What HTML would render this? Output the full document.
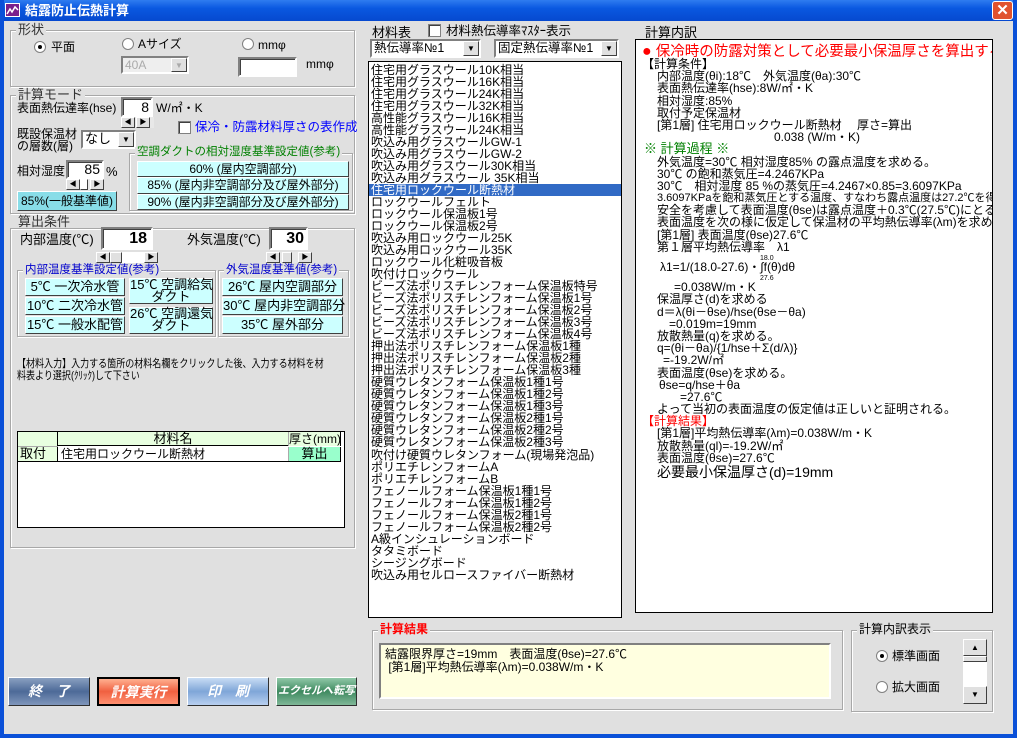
<!DOCTYPE html>
<html><head><meta charset="utf-8"><style>
*{margin:0;padding:0;box-sizing:border-box}
body{width:1017px;height:738px;overflow:hidden;background:#e0e0e0;font-family:"Liberation Sans","Noto Sans CJK JP",sans-serif;font-size:12px;color:#000;position:relative}
.a{position:absolute;white-space:nowrap;line-height:1}
.grp{position:absolute;border:1px solid #a8a8a8;box-shadow:inset 1px 1px 0 #fff,1px 1px 0 #fff}
.lbl{position:absolute;background:#e0e0e0;padding:0 2px;white-space:nowrap;line-height:1}
.tb{position:absolute;background:#fff;border:2px solid;border-color:#808080 #fff #fff #808080;box-shadow:inset 1px 1px 0 #404040}
.btn{position:absolute;border:1px solid;border-color:#fff #404040 #404040 #fff;text-align:center;white-space:nowrap}
.cy{background:#ccffff}
.radio{position:absolute;width:12px;height:12px;border-radius:50%;background:#fff;border:1px solid #808080}
.radio.on::after{content:"";position:absolute;left:3px;top:3px;width:4px;height:4px;border-radius:50%;background:#000}
.chk{position:absolute;width:13px;height:13px;background:#fff;border:1px solid #808080;box-shadow:inset 1px 1px 0 #404040}
.sb{position:absolute;height:11px;background:#e8e8e8}
.sb i{position:absolute;top:0;width:14px;height:11px;background:#e0e0e0;border:1px solid;border-color:#fff #404040 #404040 #fff;font-style:normal;font-size:7px;line-height:9px;text-align:center}
.combo{position:absolute;background:#fff;border:2px solid;border-color:#808080 #fff #fff #808080;padding-left:2px;line-height:14px}
.combo b{position:absolute;right:0;top:0;width:16px;height:100%;background:#e0e0e0;border:1px solid;border-color:#fff #404040 #404040 #fff;font-size:8px;text-align:center;line-height:13px;font-weight:normal}
.list div{height:12.03px;line-height:12px;padding-left:2px;white-space:nowrap;font-size:12px}
.rt div{height:12.2px;line-height:12px;white-space:nowrap}
.bb{position:absolute;height:29px;border:1px solid;border-color:#fff #303030 #303030 #fff;color:#fff;font-weight:bold;font-style:italic;text-align:center;line-height:26px;font-size:14px}
</style></head><body>
<div class="a" style="left:0;top:0;width:1017px;height:21px;background:linear-gradient(#2f7cf0,#0a58e0 40%,#0649cf)"></div>
<div class="a" style="left:0;top:0;width:4px;height:738px;background:#0a50d8"></div>
<div class="a" style="left:1013px;top:0;width:4px;height:738px;background:#0a50d8"></div>
<div class="a" style="left:0;top:734px;width:1017px;height:4px;background:#0a50d8"></div>
<div class="a" style="left:5px;top:3px;width:15px;height:14px;background:#7a1f8c;border:1px solid #fff"><svg width="13" height="12"><path d="M1 10 L4 5 L6 8 L9 3 L12 6" stroke="#fff" stroke-width="1.5" fill="none"/></svg></div>
<div class="a" style="left:25px;top:4px;color:#fff;font-weight:bold;font-size:13px">結露防止伝熱計算</div>
<div class="a" style="left:992px;top:1px;width:21px;height:19px;background:#e0522e;border:1px solid #fff;border-radius:3px;color:#fff;text-align:center;font-size:15px;line-height:17px;font-weight:bold">✕</div>

<div class="grp" style="left:10px;top:30px;width:345px;height:57px"></div>
<div class="lbl" style="left:16px;top:23px;font-size:13px;color:#333">形状</div>
<div class="radio on" style="left:34px;top:41px"></div><div class="a" style="left:51px;top:41px">平面</div>
<div class="radio" style="left:122px;top:38px"></div><div class="a" style="left:138px;top:38px">Aサイズ</div>
<div class="radio" style="left:242px;top:38px"></div><div class="a" style="left:258px;top:39px">mmφ</div>
<div class="combo" style="left:121px;top:56px;width:68px;height:18px;color:#aaa;background:#eee">40A<b style="color:#aaa">▼</b></div>
<div class="tb" style="left:238px;top:57px;width:59px;height:20px"></div>
<div class="a" style="left:306px;top:58px">mmφ</div>

<div class="grp" style="left:10px;top:95px;width:345px;height:119px"></div>
<div class="lbl" style="left:16px;top:88px;font-size:13px;color:#333">計算モード</div>
<div class="a" style="left:17px;top:102px">表面熱伝達率(hse)</div>
<div class="tb" style="left:121px;top:97px;width:32px;height:20px;text-align:right;font-size:14px;padding-right:2px;line-height:16px">8</div>
<div class="a" style="left:156px;top:102px">W/㎡・K</div>
<div class="sb" style="left:121px;top:117px;width:33px"><i style="left:0">◀</i><i style="left:15px">▶</i></div>
<div class="chk" style="left:178px;top:121px"></div>
<div class="a" style="left:195px;top:121px;color:#0000ff;font-size:12.5px">保冷・防露材料厚さの表作成</div>
<div class="a" style="left:17px;top:128px">既設保温材</div>
<div class="a" style="left:17px;top:140px">の層数(層)</div>
<div class="combo" style="left:81px;top:130px;width:55px;height:19px;font-size:13px">なし<b>▼</b></div>
<div class="a" style="left:17px;top:165px">相対湿度</div>
<div class="tb" style="left:66px;top:160px;width:38px;height:19px;text-align:right;font-size:14px;padding-right:2px;line-height:15px">85</div>
<div class="a" style="left:106px;top:165px;font-size:13px">%</div>
<div class="sb" style="left:66px;top:179px;width:38px"><i style="left:0">◀</i><i style="left:24px">▶</i><i style="left:14px;width:8px;background:#fff"></i></div>
<div class="btn" style="left:17px;top:191px;width:100px;height:20px;background:#88dde8;line-height:18px">85%(一般基準値)</div>
<div class="grp" style="left:129px;top:153px;width:224px;height:58px"></div>
<div class="lbl" style="left:135px;top:147px;color:#008000;font-size:11.5px">空調ダクトの相対湿度基準設定値(参考)</div>
<div class="btn cy" style="left:137px;top:161px;width:212px;height:16px;line-height:14px">60% (屋内空調部分)</div>
<div class="btn cy" style="left:137px;top:177px;width:212px;height:17px;line-height:15px">85% (屋内非空調部分及び屋外部分)</div>
<div class="btn cy" style="left:137px;top:194px;width:212px;height:16px;line-height:14px">90% (屋内非空調部分及び屋外部分)</div>

<div class="grp" style="left:10px;top:228px;width:345px;height:320px"></div>
<div class="lbl" style="left:16px;top:215px;font-size:13px;color:#333">算出条件</div>
<div class="a" style="left:20px;top:233px;font-size:13px">内部温度(℃)</div>
<div class="tb" style="left:101px;top:227px;width:52px;height:23px;text-align:right;font-size:16px;font-weight:bold;padding-right:4px;line-height:19px">18</div>
<div class="sb" style="left:96px;top:252px;width:62px;background:#fff"><i style="left:0">◀</i><i style="left:48px">▶</i><i style="left:14px;width:12px"></i></div>
<div class="a" style="left:187px;top:233px;font-size:13px">外気温度(℃)</div>
<div class="tb" style="left:269px;top:227px;width:39px;height:23px;text-align:right;font-size:16px;font-weight:bold;padding-right:2px;line-height:19px">30</div>
<div class="sb" style="left:266px;top:252px;width:46px"><i style="left:0">◀</i><i style="left:32px">▶</i><i style="left:16px;width:10px"></i></div>
<div class="grp" style="left:17px;top:270px;width:199px;height:67px"></div>
<div class="lbl" style="left:23px;top:265px;color:#0000cc;font-size:11.5px">内部温度基準設定値(参考)</div>
<div class="grp" style="left:218px;top:270px;width:131px;height:67px"></div>
<div class="lbl" style="left:224px;top:265px;color:#0000cc;font-size:11.5px">外気温度基準値(参考)</div>
<div class="btn cy" style="left:25px;top:278px;width:100px;height:18px;line-height:16px;font-size:13px">5℃ 一次冷水管</div>
<div class="btn cy" style="left:25px;top:297px;width:100px;height:18px;line-height:16px;font-size:13px">10℃ 二次冷水管</div>
<div class="btn cy" style="left:25px;top:316px;width:100px;height:18px;line-height:16px;font-size:13px">15℃ 一般水配管</div>
<div class="btn cy" style="left:129px;top:278px;width:84px;height:26px;line-height:12px;font-size:13px">15℃ 空調給気<br>ダクト</div>
<div class="btn cy" style="left:129px;top:307px;width:84px;height:27px;line-height:12px;font-size:13px">26℃ 空調還気<br>ダクト</div>
<div class="btn cy" style="left:222px;top:278px;width:121px;height:18px;line-height:16px;font-size:13px">26℃ 屋内空調部分</div>
<div class="btn cy" style="left:222px;top:297px;width:121px;height:18px;line-height:16px;font-size:13px">30℃ 屋内非空調部分</div>
<div class="btn cy" style="left:222px;top:316px;width:121px;height:18px;line-height:16px;font-size:13px">35℃ 屋外部分</div>
<div class="a" style="left:17px;top:358px;font-size:11px;line-height:12px;transform:scaleX(0.82);transform-origin:0 0">【材料入力】入力する箇所の材料名欄をクリックした後、入力する材料を材<br>料表より選択(ｸﾘｯｸ)して下さい</div>
<div class="a" style="left:17px;top:431px;width:328px;height:97px;background:#fff;border:1px solid #000"></div>
<div class="a" style="left:18px;top:432px;width:40px;height:29px;background:#e8ffe0;border-right:1px solid #000"></div>
<div class="a" style="left:58px;top:432px;width:230px;height:14px;background:#e8ffe0;border-bottom:1px solid #000;text-align:center;font-size:13px;line-height:14px">材料名</div>
<div class="a" style="left:288px;top:432px;width:53px;height:14px;background:#e8ffe0;border-left:1px solid #aaa;border-right:1px solid #000;font-size:12px;line-height:14px">厚さ(mm)</div>
<div class="a" style="left:18px;top:446px;width:40px;height:1px;background:#aaa"></div>
<div class="a" style="left:20px;top:447px;font-size:13px">取付</div>
<div class="a" style="left:61px;top:448px">住宅用ロックウール断熱材</div>
<div class="a" style="left:288px;top:447px;width:53px;height:14px;background:#99ffcc;border-left:1px solid #aaa;border-right:1px solid #000;text-align:center;font-size:13px;line-height:14px">算出</div>
<div class="a" style="left:18px;top:461px;width:323px;height:1px;background:#000"></div>

<div class="a" style="left:372px;top:26px;font-size:13px">材料表</div>
<div class="chk" style="left:428px;top:24px"></div>
<div class="a" style="left:446px;top:25px;font-size:12.5px">材料熱伝導率ﾏｽﾀｰ表示</div>
<div class="combo" style="left:370px;top:39px;width:111px;height:19px;font-size:12.5px">熱伝導率№1<b>▼</b></div>
<div class="combo" style="left:494px;top:39px;width:125px;height:19px;font-size:12.5px">固定熱伝導率№1<b>▼</b></div>
<div class="a list" style="left:368px;top:61px;width:254px;height:557px;background:#fff;border:1px solid #000;padding-top:2px">
<div>住宅用グラスウール10K相当</div><div>住宅用グラスウール16K相当</div><div>住宅用グラスウール24K相当</div><div>住宅用グラスウール32K相当</div><div>高性能グラスウール16K相当</div><div>高性能グラスウール24K相当</div><div>吹込み用グラスウールGW-1</div><div>吹込み用グラスウールGW-2</div><div>吹込み用グラスウール30K相当</div><div>吹込み用グラスウール 35K相当</div><div style="background:#316ac5;color:#fff">住宅用ロックウール断熱材</div><div>ロックウールフェルト</div><div>ロックウール保温板1号</div><div>ロックウール保温板2号</div><div>吹込み用ロックウール25K</div><div>吹込み用ロックウール35K</div><div>ロックウール化粧吸音板</div><div>吹付けロックウール</div><div>ビーズ法ポリスチレンフォーム保温板特号</div><div>ビーズ法ポリスチレンフォーム保温板1号</div><div>ビーズ法ポリスチレンフォーム保温板2号</div><div>ビーズ法ポリスチレンフォーム保温板3号</div><div>ビーズ法ポリスチレンフォーム保温板4号</div><div>押出法ポリスチレンフォーム保温板1種</div><div>押出法ポリスチレンフォーム保温板2種</div><div>押出法ポリスチレンフォーム保温板3種</div><div>硬質ウレタンフォーム保温板1種1号</div><div>硬質ウレタンフォーム保温板1種2号</div><div>硬質ウレタンフォーム保温板1種3号</div><div>硬質ウレタンフォーム保温板2種1号</div><div>硬質ウレタンフォーム保温板2種2号</div><div>硬質ウレタンフォーム保温板2種3号</div><div>吹付け硬質ウレタンフォーム(現場発泡品)</div><div>ポリエチレンフォームA</div><div>ポリエチレンフォームB</div><div>フェノールフォーム保温板1種1号</div><div>フェノールフォーム保温板1種2号</div><div>フェノールフォーム保温板2種1号</div><div>フェノールフォーム保温板2種2号</div><div>A級インシュレーションボード</div><div>タタミボード</div><div>シージングボード</div><div>吹込み用セルロースファイバー断熱材</div>
</div>

<div class="a" style="left:645px;top:26px;font-size:13px">計算内訳</div>
<div class="a" style="left:635px;top:39px;width:358px;height:574px;background:#fff;border:1px solid #000;overflow:hidden">
<div class="a" style="left:6px;top:4px;color:#f00;font-size:14.5px"><span style="font-size:16px">●</span> 保冷時の防露対策として必要最小保温厚さを算出する</div>
<div class="rt a" style="left:0;top:18px;width:358px;font-size:12px">
<div style="padding-left:6px">【計算条件】</div>
<div style="padding-left:21px">内部温度(θi):18℃　外気温度(θa):30℃</div>
<div style="padding-left:21px">表面熱伝達率(hse):8W/㎡・K</div>
<div style="padding-left:21px">相対湿度:85%</div>
<div style="padding-left:21px">取付予定保温材</div>
<div style="padding-left:21px">[第1層]  住宅用ロックウール断熱材　 厚さ=算出</div>
<div style="padding-left:138px">0.038 (W/m・K)</div>
<div style="padding-left:8px;color:#008000;font-size:13px">※  計算過程  ※</div>
<div style="padding-left:21px">外気温度=30℃  相対湿度85% の露点温度を求める。</div>
<div style="padding-left:21px">30℃ の飽和蒸気圧=4.2467KPa</div>
<div style="padding-left:21px">30℃　相対湿度 85 %の蒸気圧=4.2467×0.85=3.6097KPa</div>
<div style="padding-left:21px;font-size:11px">3.6097KPaを飽和蒸気圧とする温度、すなわち露点温度は27.2℃を得る</div>
<div style="padding-left:21px">安全を考慮して表面温度(θse)は露点温度＋0.3℃(27.5℃)にとる</div>
<div style="padding-left:21px">表面温度を次の様に仮定して保温材の平均熱伝導率(λm)を求める</div>
<div style="padding-left:21px">[第1層]  表面温度(θse)27.6℃</div>
<div style="padding-left:21px">第１層平均熱伝導率　λ1</div>
<div style="padding-left:124px;font-size:7px;height:8px">18.0</div>
<div style="padding-left:24px">λ1=1/(18.0-27.6)・∫f(θ)dθ</div>
<div style="padding-left:124px;font-size:7px;height:8px">27.6</div>
<div style="padding-left:38px">=0.038W/m・K</div>
<div style="padding-left:21px">保温厚さ(d)を求める</div>
<div style="padding-left:21px">d＝λ(θi－θse)/hse(θse－θa)</div>
<div style="padding-left:33px">=0.019m=19mm</div>
<div style="padding-left:21px">放散熱量(q)を求める。</div>
<div style="padding-left:21px">q=(θi－θa)/{1/hse＋Σ(d/λ)}</div>
<div style="padding-left:27px">=-19.2W/㎡</div>
<div style="padding-left:21px">表面温度(θse)を求める。</div>
<div style="padding-left:23px">θse=q/hse＋θa</div>
<div style="padding-left:44px">=27.6℃</div>
<div style="padding-left:21px">よって当初の表面温度の仮定値は正しいと証明される。</div>
<div style="padding-left:6px;color:#f00">【計算結果】</div>
<div style="padding-left:21px">[第1層]平均熱伝導率(λm)=0.038W/m・K</div>
<div style="padding-left:21px">放散熱量(ql)=-19.2W/㎡</div>
<div style="padding-left:21px">表面温度(θse)=27.6℃</div>
<div style="padding-left:21px;font-size:14px;height:16px;line-height:16px">必要最小保温厚さ(d)=19mm</div>
</div>
</div>

<div class="grp" style="left:372px;top:630px;width:471px;height:80px"></div>
<div class="lbl" style="left:378px;top:623px;color:#f00;font-weight:bold">計算結果</div>
<div class="a" style="left:379px;top:643px;width:452px;height:56px;background:#ffffe0;border:2px solid;border-color:#808080 #fff #fff #808080;padding:3px 4px;font-size:12px;line-height:13px">結露限界厚さ=19mm　表面温度(θse)=27.6℃<br>&nbsp;[第1層]平均熱伝導率(λm)=0.038W/m・K</div>

<div class="grp" style="left:851px;top:630px;width:142px;height:82px"></div>
<div class="lbl" style="left:857px;top:623px">計算内訳表示</div>
<div class="radio on" style="left:876px;top:650px"></div><div class="a" style="left:892px;top:650px">標準画面</div>
<div class="radio" style="left:876px;top:681px"></div><div class="a" style="left:892px;top:681px">拡大画面</div>
<div class="a" style="left:963px;top:639px;width:24px;height:65px;background:#fff"></div>
<div class="btn" style="left:963px;top:639px;width:24px;height:17px;background:#e0e0e0;font-size:8px;line-height:15px">▲</div>
<div class="btn" style="left:963px;top:656px;width:24px;height:6px;background:#e0e0e0"></div>
<div class="btn" style="left:963px;top:686px;width:24px;height:18px;background:#e0e0e0;font-size:8px;line-height:16px">▼</div>

<div class="bb" style="left:8px;top:677px;width:82px;background:linear-gradient(#8aa0c0,#4d6a98 50%,#7f96bb)">終　了</div>
<div class="bb" style="left:97px;top:677px;width:83px;background:linear-gradient(#ffb090,#f06040 50%,#ff9070);border:2px solid #000;color:#fff">計算実行</div>
<div class="bb" style="left:187px;top:677px;width:82px;background:linear-gradient(#c8dcf4,#7fa6d8 50%,#b8d0f0)">印　刷</div>
<div class="bb" style="left:276px;top:677px;width:81px;background:linear-gradient(#90c8a8,#3f8a60 50%,#80b898);font-size:11px">エクセルへ転写</div>
</body></html>
